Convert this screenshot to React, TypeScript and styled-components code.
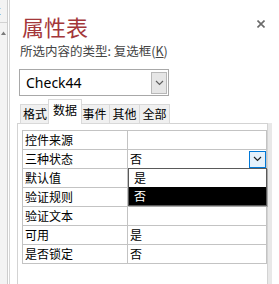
import React from 'react';
import styled, { createGlobalStyle } from 'styled-components';

const GlobalStyle = createGlobalStyle`
  html, body {
    margin: 0;
    padding: 0;
    background: #fff;
  }
  body {
    font-family: "Noto Sans CJK SC", "Noto Sans", sans-serif;
    color: #000;
    overflow: hidden;
  }
`;

const Frame = styled.div`
  display: flex;
  width: 279px;
  height: 284px;
  overflow: hidden;
`;

const SideStrip = styled.div`
  flex: none;
  width: 7px;
  background: #f3f3f3;
  border-right: 1px solid #cdcdcd;
  display: flex;
  flex-direction: column;
`;

const SideHead = styled.div`
  height: 22px;
  border-bottom: 1px solid #d2d2d2;
  font: 12px/22px "Liberation Sans", sans-serif;
  color: #333;
  overflow: hidden;
  text-indent: -3px;
`;

const SideArrow = styled.svg`
  margin: 8px 0 0 1px;
  display: block;
`;

const Pane = styled.div`
  flex: 1;
  margin-left: 1px;
  border-left: 1px solid #d6d6d6;
  padding-left: 9px;
  display: flex;
  flex-direction: column;
`;

const Header = styled.div`
  display: flex;
  align-items: center;
  justify-content: space-between;
  padding-top: 11px;
  height: 30px;
`;

const Title = styled.div`
  padding-left: 3px;
  font-size: 22px;
  line-height: 30px;
  color: #a4373a;
`;

const CloseButton = styled.svg`
  margin-right: 14px;
  margin-bottom: 4px;
  display: block;
`;

const Subtitle = styled.div`
  margin-top: 1px;
  padding-left: 1px;
  font-size: 12.5px;
  line-height: 18px;
  color: #444;
`;

const AccessKey = styled.span`
  text-decoration: underline;
`;

const Combo = styled.div`
  margin-top: 9px;
  width: 150px;
  height: 27px;
  box-sizing: border-box;
  border: 1px solid #a8a8a8;
  display: flex;
  align-items: center;
  justify-content: space-between;
  padding: 0 1px 0 6px;
  font: 14px "Noto Sans", sans-serif;
`;

const ComboButton = styled.div`
  width: 16px;
  height: 22px;
  box-sizing: border-box;
  border: 1px solid #b8b8b8;
  background: #e6e6e6;
  display: flex;
  align-items: center;
  justify-content: center;
`;

const Tabs = styled.div`
  margin-top: 4px;
  height: 24px;
  display: flex;
  align-items: flex-end;
  padding-left: 1px;
  position: relative;
  z-index: 1;
`;

const Tab = styled.div<{ $active?: boolean }>`
  box-sizing: border-box;
  width: ${p => (p.$active ? 34 : 30)}px;
  height: ${p => (p.$active ? 25 : 20)}px;
  margin: ${p => (p.$active ? '0 -2px' : '0')};
  border: 1px solid #d9d9d9;
  border-bottom: ${p => (p.$active ? 'none' : '1px solid #d9d9d9')};
  border-left: ${p => (p.$active ? '1px solid #d9d9d9' : 'none')};
  background: ${p => (p.$active ? '#fff' : '#f0f0f0')};
  font-size: 12px;
  line-height: ${p => (p.$active ? 20 : 18)}px;
  text-align: center;
  position: relative;
  z-index: ${p => (p.$active ? 2 : 1)};
  &:first-child {
    border-left: 1px solid #d9d9d9;
  }
`;

const PanelRow = styled.div`
  flex: 1;
  display: flex;
  margin-left: -2px;
  margin-top: -1px;
`;

const Panel = styled.div`
  width: 251px;
  box-sizing: border-box;
  border: 1px solid #d3d3d3;
  border-bottom: none;
  padding: 6px 0 0 4px;
`;

const Track = styled.div`
  width: 4px;
  background: #e8e8e8;
`;

const TableWrap = styled.div`
  position: relative;
`;

const Grid = styled.table`
  border-collapse: collapse;
  width: 245px;
  font-size: 12px;
  table-layout: fixed;
`;

const LabelCell = styled.td`
  width: 105px;
  height: 18px;
  padding: 0 0 0 2px;
  border: 1px solid #c3c3c3;
  line-height: 18px;
  white-space: nowrap;
  box-sizing: border-box;
`;

const ValueCell = styled.td`
  height: 18px;
  padding: 0;
  border: 1px solid #c3c3c3;
  line-height: 18px;
  box-sizing: border-box;
`;

const ValueInner = styled.div`
  display: flex;
  align-items: center;
  height: 18px;
  padding-left: 2px;
`;

const DropButton = styled.div`
  margin-left: auto;
  width: 17px;
  height: 17px;
  box-sizing: border-box;
  border: 1px solid #0078d7;
  background: #e5f1fb;
  display: flex;
  align-items: center;
  justify-content: center;
`;

const DropList = styled.div`
  position: absolute;
  left: 106px;
  top: 38px;
  width: 139px;
  box-sizing: border-box;
  border: 1px solid #5a5a5a;
  background: #fff;
  box-shadow: 1px 1px 0 #a8a8a8;
  font-size: 12px;
`;

const DropItem = styled.div<{ $selected?: boolean }>`
  height: 18px;
  line-height: 18px;
  padding-left: 5px;
  background: ${p => (p.$selected ? '#000' : '#fff')};
  color: ${p => (p.$selected ? '#fff' : '#000')};
`;

const Chevron = ({ color }: { color: string }) => (
  <svg width="9" height="6" viewBox="0 0 9 6">
    <path d="M1 1 L4.5 4.5 L8 1" fill="none" stroke={color} strokeWidth="1.2" />
  </svg>
);

// the 默认值 value sits under the open list, so it is left blank here
const rows: [string, string][] = [
  ['控件来源', ''],
  ['三种状态', '否'],
  ['默认值', ''],
  ['验证规则', ''],
  ['验证文本', ''],
  ['可用', '是'],
  ['是否锁定', '否'],
];

const tabs = ['格式', '数据', '事件', '其他', '全部'];

export default function App() {
  return (
    <>
      <GlobalStyle />
      <Frame>
        <SideStrip>
          <SideHead>t</SideHead>
          <SideArrow width="5" height="4" viewBox="0 0 5 4">
            <path d="M0 4 L2.5 0.5 L5 4 Z" fill="#7a7a7a" />
          </SideArrow>
        </SideStrip>
        <Pane>
          <Header>
            <Title>属性表</Title>
            <CloseButton width="8" height="8" viewBox="0 0 8 8">
              <path d="M0.5 0.5 L7.5 7.5 M7.5 0.5 L0.5 7.5" stroke="#6a6a6a" strokeWidth="1.6" />
            </CloseButton>
          </Header>
          <Subtitle>
            所选内容的类型: 复选框(<AccessKey>K</AccessKey>)
          </Subtitle>
          <Combo>
            <span>Check44</span>
            <ComboButton>
              <Chevron color="#606060" />
            </ComboButton>
          </Combo>
          <Tabs>
            {tabs.map(t => (
              <Tab key={t} $active={t === '数据'}>
                {t}
              </Tab>
            ))}
          </Tabs>
          <PanelRow>
            <Panel>
              <TableWrap>
                <Grid>
                  <tbody>
                    {rows.map(([label, value], i) => (
                      <tr key={label}>
                        <LabelCell>{label}</LabelCell>
                        <ValueCell>
                          <ValueInner>
                            {value}
                            {i === 1 && (
                              <DropButton>
                                <Chevron color="#222" />
                              </DropButton>
                            )}
                          </ValueInner>
                        </ValueCell>
                      </tr>
                    ))}
                  </tbody>
                </Grid>
                <DropList>
                  <DropItem>是</DropItem>
                  <DropItem $selected>否</DropItem>
                </DropList>
              </TableWrap>
            </Panel>
            <Track />
          </PanelRow>
        </Pane>
      </Frame>
    </>
  );
}
